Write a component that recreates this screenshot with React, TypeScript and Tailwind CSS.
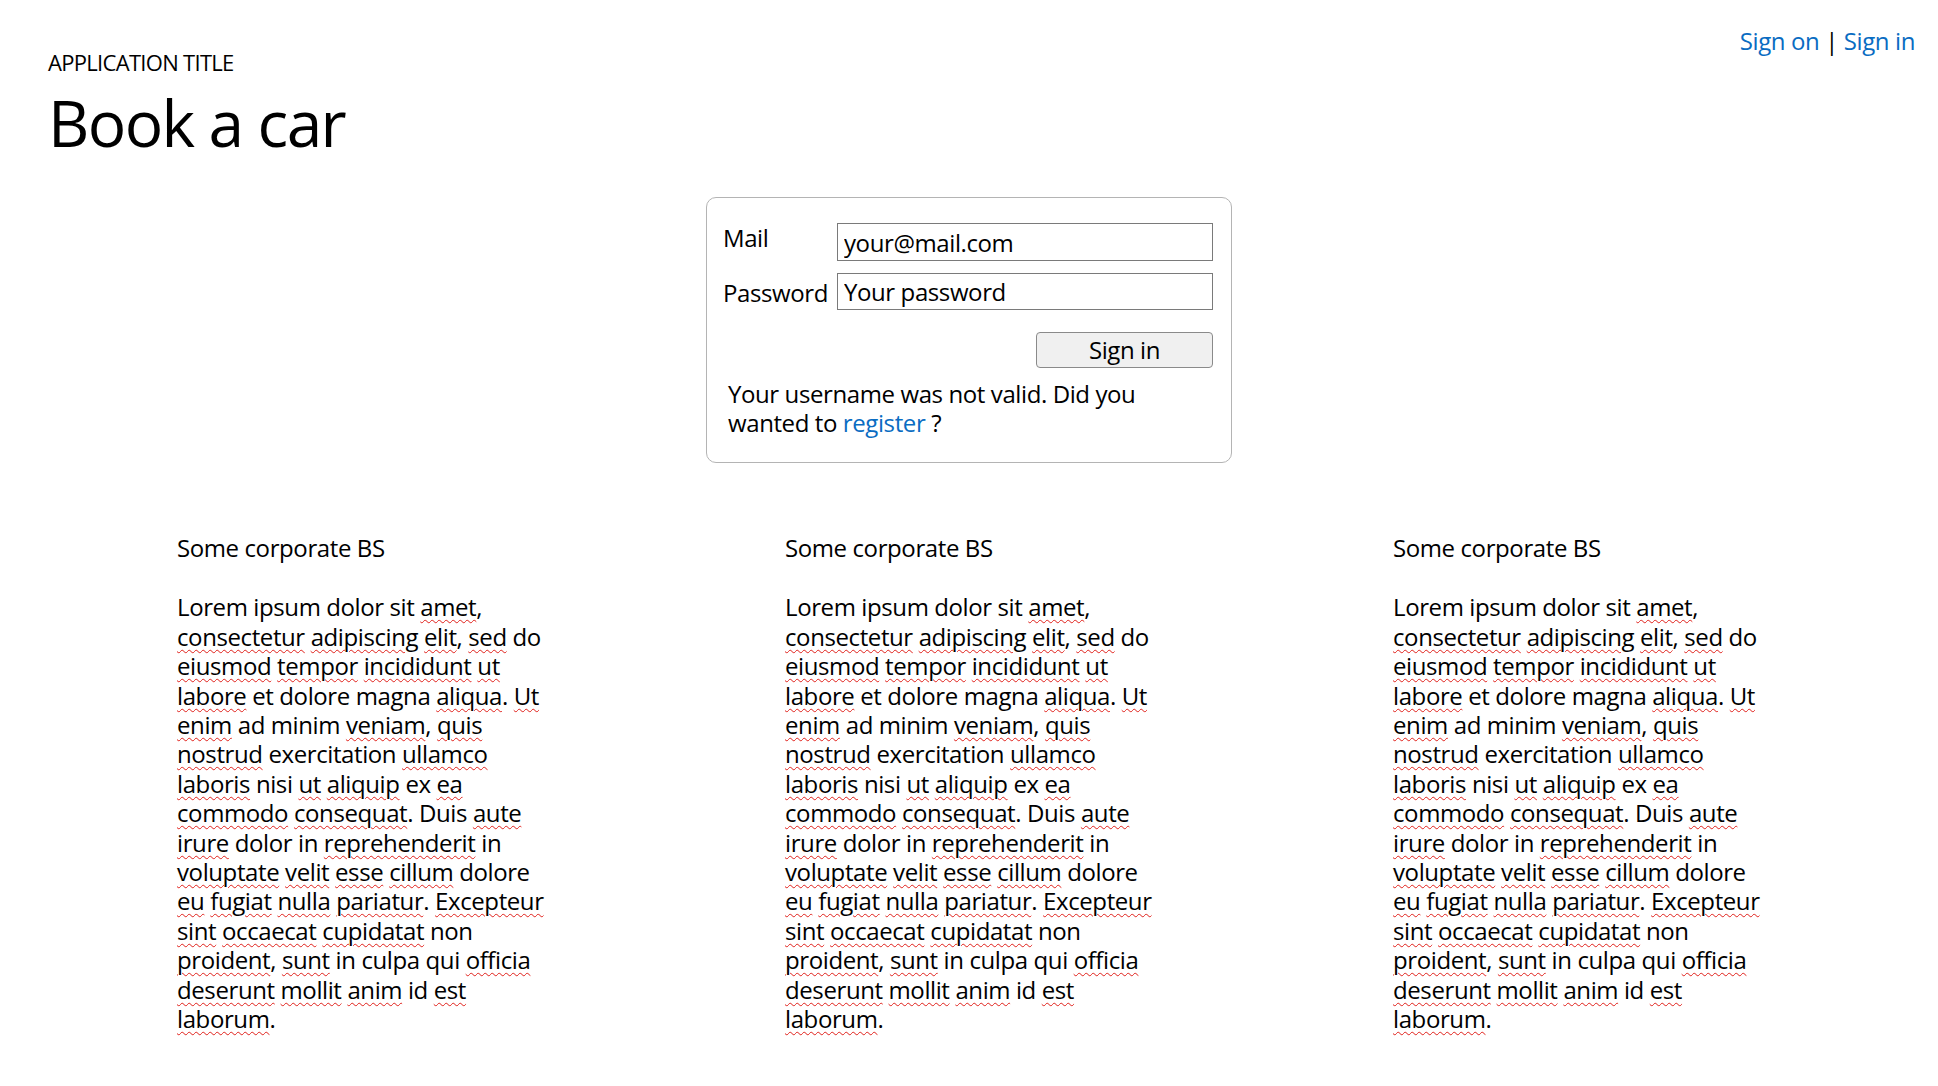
import React from "react";

const misspelled = new Set([
  "amet", "consectetur", "adipiscing", "elit", "sed", "eiusmod", "tempor",
  "incididunt", "ut", "Ut", "labore", "aliqua", "enim", "veniam", "quis",
  "nostrud", "ullamco", "laboris", "aliquip", "ea", "commodo", "consequat",
  "aute", "irure", "reprehenderit", "voluptate", "velit", "esse", "cillum",
  "eu", "fugiat", "nulla", "pariatur", "Excepteur", "sint", "occaecat",
  "cupidatat", "proident", "sunt", "officia", "deserunt", "mollit", "anim",
  "est", "laborum",
]);

const lines = [
  "Lorem ipsum dolor sit amet,",
  "consectetur adipiscing elit, sed do",
  "eiusmod tempor incididunt ut",
  "labore et dolore magna aliqua. Ut",
  "enim ad minim veniam, quis",
  "nostrud exercitation ullamco",
  "laboris nisi ut aliquip ex ea",
  "commodo consequat. Duis aute",
  "irure dolor in reprehenderit in",
  "voluptate velit esse cillum dolore",
  "eu fugiat nulla pariatur. Excepteur",
  "sint occaecat cupidatat non",
  "proident, sunt in culpa qui officia",
  "deserunt mollit anim id est",
  "laborum.",
];

const Word = ({ token }: { token: string }) => {
  const m = token.match(/^([A-Za-z]+)(.*)$/);
  if (!m || !misspelled.has(m[1])) return <>{token}</>;
  return (
    <>
      <span className="underline decoration-wavy decoration-[#e0201a] decoration-1 underline-offset-[3px]">
        {m[1]}
      </span>
      {m[2]}
    </>
  );
};

const Column = () => (
  <div>
    <div className="leading-[29.4px]">Some corporate BS</div>
    <div className="mt-[30px] leading-[29.4px]">
      {lines.map((line, i) => (
        <div key={i} className="whitespace-nowrap">
          {line.split(" ").map((t, j) => (
            <React.Fragment key={j}>
              {j > 0 && " "}
              <Word token={t} />
            </React.Fragment>
          ))}
        </div>
      ))}
    </div>
  </div>
);

export default function App() {
  return (
    <div className="min-h-screen bg-white text-black font-['Open_Sans',sans-serif] text-[24px] tracking-[-0.4px]">
      <header className="flex justify-between">
        <div className="pl-[48px] pt-[47px]">
          <div className="text-[22px] leading-[30px] tracking-[-0.7px]">APPLICATION TITLE</div>
          <h1 className="mt-[6px] text-[64px] leading-[80px] tracking-[-1.6px]">Book a car</h1>
        </div>
        <div className="pt-[25px] pr-[23px] leading-[32px]">
          <a href="#" className="text-[#0a6cc2]">Sign on</a> |{" "}
          <a href="#" className="text-[#0a6cc2]">Sign in</a>
        </div>
      </header>

      <div className="ml-[706px] mt-[34px] w-[526px] rounded-[10px] border border-[#b4b4b4] pl-[16px] pr-[18px] pt-[25px] pb-[25px]">
        <div className="flex items-start">
          <label className="w-[114px] leading-[32px] -mt-[1px]">Mail</label>
          <input
            defaultValue="your@mail.com"
            className="h-[38px] w-[376px] border border-[#7a7a7a] px-[6px] leading-[32px] outline-none"
          />
        </div>
        <div className="mt-[12px] flex items-start">
          <label className="w-[114px] leading-[32px] mt-[4px]">Password</label>
          <input
            placeholder="Your password"
            className="h-[37px] w-[376px] border border-[#7a7a7a] px-[6px] leading-[32px] outline-none placeholder:text-black"
          />
        </div>
        <div className="mt-[22px] flex justify-end">
          <button className="h-[36px] w-[177px] rounded-[4px] border border-[#8a8a8a] bg-[#f0f0f0] leading-[34px]">
            Sign in
          </button>
        </div>
        <p className="mt-[11px] pl-[5px] leading-[29px]">
          Your username was not valid. Did you
          <br />
          wanted to <a href="#" className="text-[#0a6cc2]">register</a> ?
        </p>
      </div>

      <div className="mt-[70px] grid grid-cols-[repeat(3,608px)] pl-[177px]">
        <Column />
        <Column />
        <Column />
      </div>
    </div>
  );
}
